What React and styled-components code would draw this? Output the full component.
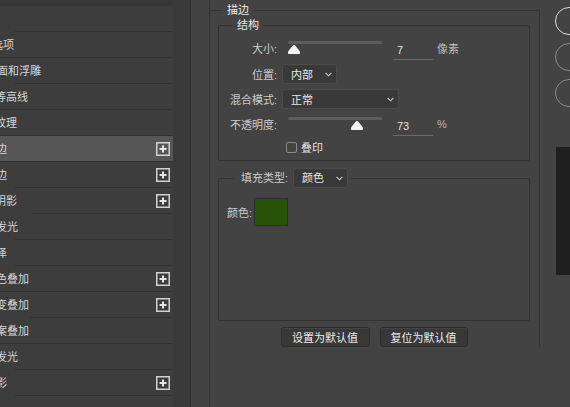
import React from "react";
import styled, { createGlobalStyle } from "styled-components";

const FONT = `"Liberation Sans", "Noto Sans CJK SC", sans-serif`;

const Global = createGlobalStyle`
  html, body { margin: 0; padding: 0; background: #434343; }
  body { font-family: ${FONT}; font-size: 11px; -webkit-font-smoothing: antialiased; }
  #root { width: 570px; height: 407px; overflow: hidden; }
  * { box-sizing: border-box; }
`;

const Dialog = styled.div`
  display: flex;
  width: 570px;
  height: 407px;
  overflow: hidden;
  background: #434343;
  color: #d8d8d8;
  font-family: ${FONT};
  font-size: 11px;
`;

/* ---------- left style list ---------- */
const Sidebar = styled.div`
  flex: 0 0 191px;
  display: flex;
  background: #3a3a3a;
  border-right: 1px solid #303030;
`;

const StyleList = styled.ul`
  list-style: none;
  margin: 0;
  padding: 6px 0 0;
  flex: 0 0 173px;
  width: 173px;
  overflow: hidden;
  background: #3d3d3d;
  box-shadow: inset 0 6px 0 #383838;
`;

const StyleRow = styled.li`
  height: 26px;
  display: flex;
  flex-direction: column;
  background: ${(p) => (p.$active ? "#565656" : "#3d3d3d")};
`;

const RowBody = styled.div`
  flex: 1;
  display: flex;
  align-items: center;
  padding-right: 3px;
  min-width: 0;
`;

const RowLabel = styled.span`
  flex: 1;
  margin-left: ${(p) => p.$indent}px;
  white-space: nowrap;
  color: #d6d6d6;
  line-height: 14px;
`;

const RowSep = styled.div`
  height: 1px;
  margin-left: ${(p) => p.$sep}px;
  background: #313131;
`;

const PlusBox = styled.svg`
  flex: none;
  width: 14px;
  height: 14px;
`;

const ScrollStrip = styled.div`
  flex: 1;
  background: #3a3a3a;
`;

/* ---------- main settings ---------- */
const Main = styled.div`
  flex: 1;
  display: flex;
  min-width: 0;
`;

const Column = styled.div`
  flex: 0 0 331px;
  margin-left: 18px;
  border-left: 1px solid #333333;
`;

const OuterGroup = styled.fieldset`
  margin: 3px 0 0;
  padding: 1px 9px 0 8px;
  min-width: 0;
  border: 0;
  border-top: 1px solid #333333;
  border-right: 1px solid #333333;
`;

const OuterTitle = styled.legend`
  margin-left: 5px;
  padding: 0 4px;
  line-height: 14px;
  color: #eeeeee;
`;

const Group = styled.fieldset`
  margin: ${(p) => p.$mt || 0}px 0 0;
  padding: ${(p) => p.$pad};
  width: 312px;
  min-width: 0;
  border: 1px solid #313131;
  border-radius: 2px;
`;

const GroupTitle = styled.legend`
  margin-left: 14px;
  padding: ${(p) => p.$pad || "0 4px"};
  line-height: 14px;
  color: #e4e4e4;
`;

const LegendInner = styled.span`
  display: inline-flex;
  align-items: center;
  height: 20px;
`;

const FieldRow = styled.div`
  display: flex;
  align-items: center;
  height: ${(p) => p.$h}px;
`;

const FieldLabel = styled.span`
  flex: 0 0 58px;
  width: 58px;
  text-align: right;
  white-space: nowrap;
  color: #cccccc;
`;

const Slider = styled.div`
  position: relative;
  flex: none;
  width: 94px;
  height: 14px;
  margin-left: 11px;
`;

const Track = styled.div`
  height: 3px;
  border-radius: 2px;
  background: #5d5d5d;
`;

const Thumb = styled.svg`
  position: absolute;
  top: 4px;
  width: 12px;
  height: 9px;
`;

const ValueInput = styled.input`
  flex: none;
  width: 40px;
  height: 20px;
  margin: 4px 0 0 11px;
  padding: 0 0 0 4px;
  border: 0;
  border-bottom: 1px solid #6a6a6a;
  background: transparent;
  color: #e2e2e2;
  font: inherit;
  outline: none;
`;

const Unit = styled.span`
  margin-left: 4px;
  color: #b8b8b8;
`;

const Select = styled.div`
  flex: none;
  display: flex;
  align-items: center;
  justify-content: space-between;
  width: ${(p) => p.$w}px;
  height: 20px;
  margin-left: ${(p) => p.$ml}px;
  padding: 0 4px 0 8px;
  background: #393939;
  border: 1px solid #4b4b4b;
  border-radius: 3px;
  color: #e8e8e8;
`;

const Chevron = styled.svg`
  width: 7px;
  height: 5px;
`;

const Check = styled.span`
  flex: none;
  width: 11px;
  height: 11px;
  margin-left: 9px;
  border: 1px solid #8a8a8a;
  border-radius: 2px;
`;

const CheckText = styled.span`
  margin-left: 4px;
  color: #e2e2e2;
`;

const FillLabel = styled.span`
  color: #cccccc;
  white-space: nowrap;
`;

const ColorRow = styled.div`
  display: flex;
  align-items: center;
  margin-left: 8px;
  gap: 2px;
`;

const Swatch = styled.div`
  width: 34px;
  height: 28px;
  background: #275208;
  border: 1px solid #2e2e2e;
`;

const ButtonRow = styled.div`
  display: flex;
  justify-content: center;
  gap: 10px;
  margin-top: 6px;
`;

const DefaultButton = styled.button`
  width: ${(p) => p.$w}px;
  height: 20px;
  padding: 0;
  background: #383838;
  border: 1px solid #2e2e2e;
  border-radius: 3px;
  box-shadow: inset 0 1px 0 #444;
  color: #ececec;
  font: inherit;
`;

/* ---------- right column ---------- */
const Side = styled.div`
  flex: 1;
  display: flex;
  flex-direction: column;
  align-items: flex-start;
  gap: 8px;
  padding: 7px 0 0 15px;
  min-width: 0;
`;

const Pill = styled.button`
  flex: none;
  width: 90px;
  height: 28px;
  border-radius: 14px;
  border: 1.5px solid ${(p) => (p.$primary ? "#dddddd" : "#8a8a8a")};
  background: transparent;
  color: #e0e0e0;
  font: inherit;
`;

const Preview = styled.div`
  flex: none;
  width: 40px;
  height: 128px;
  margin: 32px 0 0 1px;
  background: #1f1f1f;
`;

const rows = [
  { label: "样式", indent: -60, sep: 15 },
  { label: "混合选项", indent: -30, sep: 0 },
  { label: "斜面和浮雕", indent: -14, sep: 15 },
  { label: "等高线", indent: -5, sep: 0 },
  { label: "纹理", indent: -5, sep: 0 },
  { label: "描边", indent: -15, plus: true, active: true, sep: 0 },
  { label: "描边", indent: -15, plus: true, sep: 15 },
  { label: "内阴影", indent: -16, plus: true, sep: 32 },
  { label: "内发光", indent: -15, sep: 15 },
  { label: "光泽", indent: -15, sep: 15 },
  { label: "颜色叠加", indent: -15, plus: true, sep: 0 },
  { label: "渐变叠加", indent: -15, plus: true, sep: 30 },
  { label: "图案叠加", indent: -15, sep: 0 },
  { label: "外发光", indent: -15, sep: 15 },
  { label: "投影", indent: -15, plus: true, sep: 15 },
];

function Plus() {
  return (
    <PlusBox viewBox="0 0 14 14">
      <rect x="0.75" y="0.75" width="12.5" height="12.5" fill="none" stroke="#d2d2d2" strokeWidth="1.5" />
      <path d="M3.5 7H10.5M7 3.5V10.5" stroke="#e6e6e6" strokeWidth="2" />
    </PlusBox>
  );
}

function Down() {
  return (
    <Chevron viewBox="0 0 7 5">
      <polyline points="0.6,0.8 3.5,3.8 6.4,0.8" fill="none" stroke="#cfcfcf" strokeWidth="1.1" />
    </Chevron>
  );
}

function RangeSlider({ value, max }) {
  const left = Math.max(0, (value / max) * 94 - 6);
  return (
    <Slider>
      <Track />
      <Thumb viewBox="0 0 12 9" style={{ left }}>
        <path
          d="M6 0C6.6 0 7 .3 7.4.8L11.4 5.8C11.8 6.3 12 6.7 12 7.3V8C12 8.6 11.6 9 11 9H1C.4 9 0 8.6 0 8V7.3C0 6.7.2 6.3.6 5.8L4.6.8C5 .3 5.4 0 6 0Z"
          fill="#f2f2f2"
        />
      </Thumb>
    </Slider>
  );
}

export default function App() {
  return (
    <>
      <Global />
      <Dialog>
        <Sidebar>
          <StyleList>
            {rows.map((r, i) => (
              <StyleRow key={i} $active={r.active}>
                <RowBody>
                  <RowLabel $indent={r.indent}>{r.label}</RowLabel>
                  {r.plus && <Plus />}
                </RowBody>
                <RowSep $sep={r.sep} />
              </StyleRow>
            ))}
          </StyleList>
          <ScrollStrip />
        </Sidebar>

        <Main>
          <Column>
            <OuterGroup>
              <OuterTitle>描边</OuterTitle>

              <Group $pad="3px 0 3px">
                <GroupTitle>结构</GroupTitle>
                <FieldRow $h={26}>
                  <FieldLabel>大小:</FieldLabel>
                  <RangeSlider value={7} max={250} />
                  <ValueInput readOnly value="7" />
                  <Unit>像素</Unit>
                </FieldRow>
                <FieldRow $h={26}>
                  <FieldLabel>位置:</FieldLabel>
                  <Select $w={55} $ml={5}>
                    内部
                    <Down />
                  </Select>
                </FieldRow>
                <FieldRow $h={24}>
                  <FieldLabel>混合模式:</FieldLabel>
                  <Select $w={117} $ml={5}>
                    正常
                    <Down />
                  </Select>
                </FieldRow>
                <FieldRow $h={26}>
                  <FieldLabel>不透明度:</FieldLabel>
                  <RangeSlider value={73} max={100} />
                  <ValueInput readOnly value="73" />
                  <Unit>%</Unit>
                </FieldRow>
                <FieldRow $h={20}>
                  <FieldLabel />
                  <Check />
                  <CheckText>叠印</CheckText>
                </FieldRow>
              </Group>

              <Group $mt={7} $pad="10px 0 94px">
                <GroupTitle $pad="0 3px 0 8px">
                  <LegendInner>
                    <FillLabel>填充类型:</FillLabel>
                    <Select $w={55} $ml={5}>
                      颜色
                      <Down />
                    </Select>
                  </LegendInner>
                </GroupTitle>
                <ColorRow>
                  <FillLabel>颜色:</FillLabel>
                  <Swatch />
                </ColorRow>
              </Group>

              <ButtonRow>
                <DefaultButton $w={89}>设置为默认值</DefaultButton>
                <DefaultButton $w={88}>复位为默认值</DefaultButton>
              </ButtonRow>
            </OuterGroup>
          </Column>

          <Side>
            <Pill $primary>确定</Pill>
            <Pill>取消</Pill>
            <Pill>新建样式...</Pill>
            <Preview />
          </Side>
        </Main>
      </Dialog>
    </>
  );
}
